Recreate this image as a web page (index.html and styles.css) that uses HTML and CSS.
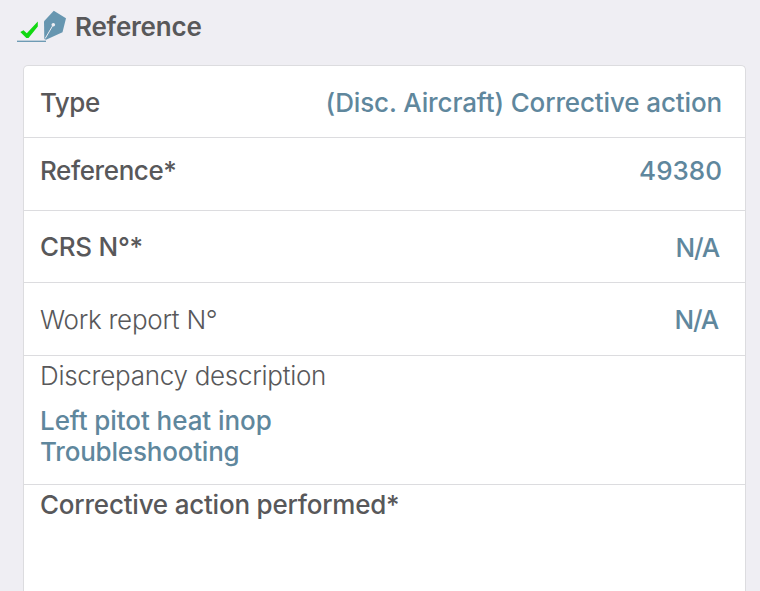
FILE: index.html
```html
<!DOCTYPE html>
<html lang="en">
<head>
  <meta charset="UTF-8" />
  <meta name="viewport" content="width=device-width, initial-scale=1.0"/>
  <title>Reference</title>
  <link rel="stylesheet" href="styles.css">
</head>
<body>
  <header class="section-header">
    <!-- signed icon: check mark, line and pen nib -->
    <svg class="sign-icon" width="50" height="34" viewBox="0 0 50 34">
      <path d="M0 31.3H29" stroke="#6796b0" stroke-width="1.3" fill="none"/>
      <path d="M3.3 22L6.5 20.2L9.8 23.2L20.8 11.5V16.5L11.5 28H9.3Z" fill="#12d812"/>
      <path d="M36.8 0.8L49 8.2L45.5 22.3L29 29.8L27.3 29L27 11.2Z" fill="#6796b0"/>
      <path d="M28.2 28.5L35.8 15.5" stroke="#efeef3" stroke-width="1" fill="none"/>
      <circle cx="36.3" cy="14.8" r="1.8" fill="#efeef3"/>
    </svg>
    <h1>Reference</h1>
  </header>

  <main class="form">
    <div class="row row-type">
      <span class="label required label-type">Type</span>
      <span class="value value-type">(Disc. Aircraft) Corrective action</span>
    </div>
    <div class="row row-reference">
      <span class="label required label-reference">Reference*</span>
      <span class="value">49380</span>
    </div>
    <div class="row row-crs">
      <span class="label required label-crs">CRS N°*</span>
      <span class="value value-na">N/A</span>
    </div>
    <div class="row row-report">
      <span class="label">Work report N°</span>
      <span class="value value-na">N/A</span>
    </div>
    <div class="block block-description">
      <span class="label">Discrepancy description</span>
      <p class="value">
        Left pitot heat inop<br>
        <span class="line-two">Troubleshooting</span>
      </p>
    </div>
    <div class="block">
      <span class="label required label-action">Corrective action performed*</span>
    </div>
  </main>
</body>
</html>
```
FILE: styles.css
```css
body {
  height: 591px;
  margin: 0;
  overflow: hidden;
  font-family: Inter, sans-serif;
  font-size: 26px;
  background: #efeef3;
  color: #58585a;
  display: flex;
  flex-direction: column;
}

.section-header {
  display: flex;
  height: 55px;
  padding: 10px 0 0 17px;
  box-sizing: border-box;
}

.sign-icon {
  flex: none;
}

h1 {
  margin: 0 0 0 8px;
  font-size: 26px;
  font-weight: 600;
  line-height: 33px;
  letter-spacing: -0.2px;
}

.form {
  flex: 1;
  margin: 10px 14px 0 23px;
  border: 1px solid #dcdcdf;
  border-bottom: none;
  border-radius: 5px 5px 0 0;
  background: #fff;
}

.row {
  display: flex;
  justify-content: space-between;
  height: 73px;
  padding: 0 23px 0 16px;
  box-sizing: border-box;
  border-bottom: 1px solid #dcdcdf;
  line-height: 72px;
}

.row-type {
  height: 72px;
  line-height: 73px;
}

.row-reference {
  line-height: 66px;
}

.row-crs {
  height: 72px;
}

.row-crs .label {
  line-height: 71px;
}

.row-crs .value {
  line-height: 73px;
}

.row-report {
  padding-right: 27px;
  line-height: 74px;
}

.row-crs {
  padding-right: 26px;
}

.label {
  font-weight: 300;
  letter-spacing: -0.28px;
}

.required {
  font-weight: 500;
}

.label-type {
  letter-spacing: -0.5px;
}

.label-reference {
  letter-spacing: -0.4px;
}

.label-action {
  letter-spacing: -0.22px;
}

.value {
  margin: 0;
  font-weight: 500;
  color: #5f879d;
}

.value-type {
  letter-spacing: -0.13px;
}

.value-na {
  letter-spacing: -1.2px;
}

.block {
  padding: 0 16px;
}

.block .label {
  display: block;
  line-height: 39px;
}

.block-description {
  height: 129px;
  box-sizing: border-box;
  border-bottom: 1px solid #dcdcdf;
}

.block .value {
  margin-top: 10px;
  line-height: 31px;
  letter-spacing: -0.07px;
}

.block .line-two {
  letter-spacing: -0.2px;
}
```
